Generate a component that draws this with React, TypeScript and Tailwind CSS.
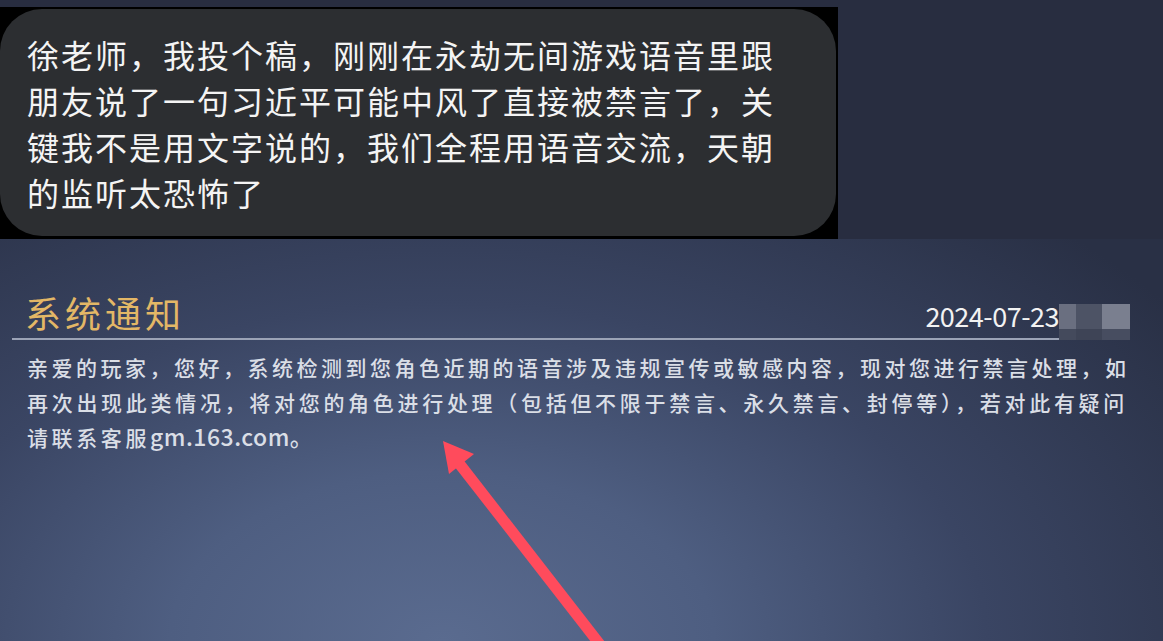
import React from "react";

const cjk = "font-['Noto_Sans_CJK_SC','Noto_Sans',sans-serif]";

export default function App() {
  return (
    <div className={`w-[1163px] h-[641px] overflow-hidden flex flex-col ${cjk}`}>
      {/* Top: chat bubble screenshot */}
      <div className="h-[239px] bg-[#282d40] pt-[7px] flex">
        <div className="w-[838px] h-[232px] bg-black pl-0 pr-[2px] pt-[2px] pb-[3px]">
          <div className="h-full rounded-[42px] bg-[#2c2e31] pl-[27px] pt-[22px]">
            <p className="text-[32px] leading-[46px] tracking-[2px] text-[#f4f4f4] font-normal">
              徐老师，我投个稿，刚刚在永劫无间游戏语音里跟
              <br />
              朋友说了一句习近平可能中风了直接被禁言了，关
              <br />
              键我不是用文字说的，我们全程用语音交流，天朝
              <br />
              的监听太恐怖了
            </p>
          </div>
        </div>
      </div>

      {/* Bottom: game notice */}
      <div className="relative flex-1 bg-[radial-gradient(ellipse_78%_140%_at_38%_100%,#5a6b8f_0%,#4e5e81_30%,#3a4563_60%,#293045_100%)] px-[12px] pt-[51px]">
        <div className="w-[1118px]">
          <div className="flex items-end justify-between pl-[13px] pb-[4px] border-b-2 border-[#9ba3b6]">
            <span className="text-[36px] leading-[44px] tracking-[4px] text-[#e3b766] font-normal">
              系统通知
            </span>
            <div className="flex items-end">
              <span className="text-[27px] leading-[32px] text-[#f2f2f2] tracking-[-0.5px] mb-[2px]">
                2024-07-23
              </span>
              <div className="grid grid-cols-[17px_26px_28px] grid-rows-[25px_11px] mb-[-6px]">
                <div className="bg-[#6a6f80]" />
                <div className="bg-[#4d5365]" />
                <div className="bg-[#7a7f8f]" />
                <div className="bg-[#444a5c]" />
                <div className="bg-[#3e4456]" />
                <div className="bg-[#474d60]" />
              </div>
            </div>
          </div>
          <p className="pl-[15px] pt-[10px] text-[21px] leading-[34.5px] text-[#dadee6] font-medium whitespace-nowrap">
            <span className="tracking-[3.5px]">
              亲爱的玩家，您好，系统检测到您角色近期的语音涉及违规宣传或敏感内容，现对您进行禁言处理，如
            </span>
            <br />
            <span className="tracking-[3.7px]">
              再次出现此类情况，将对您的角色进行处理（包括但不限于禁言、永久禁言、封停等），若对此有疑问
            </span>
            <br />
            <span className="tracking-[3.6px]">请联系客服</span>
            <span className="text-[23px] tracking-[0.5px]">gm.163.com。</span>
          </p>
        </div>

        <svg
          className="absolute left-0 top-0 pointer-events-none"
          width="1163"
          height="402"
          viewBox="0 239 1163 402"
        >
          <line x1="458" y1="462" x2="612" y2="660" stroke="#ff4b5c" strokeWidth="11" />
          <polygon points="443,441 449,474 474,454" fill="#ff4b5c" />
        </svg>
      </div>
    </div>
  );
}
